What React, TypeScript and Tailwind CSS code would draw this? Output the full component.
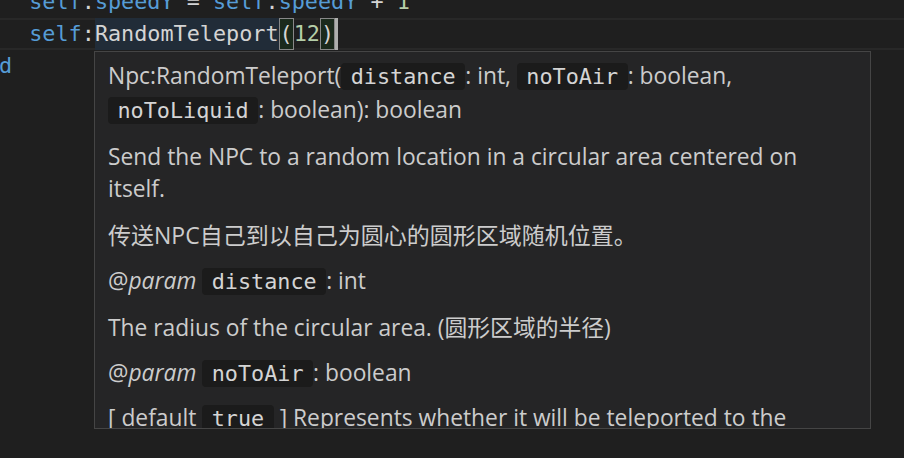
import React from "react";

const MONO = "font-['DejaVu_Sans_Mono',monospace] text-[21.8px]";
const SANS = "font-['Open_Sans','Noto_Sans_CJK_SC',sans-serif]";

function Chip({ children }: { children: React.ReactNode }) {
  return (
    <span
      className={`${MONO} inline-block h-[27px] rounded-[4px] bg-[#1b1b1b] px-[9.5px] leading-[27px] text-[#d4d4d4]`}
    >
      {children}
    </span>
  );
}

function Param({ name, type }: { name: string; type: string }) {
  return (
    <div className="flex h-[32px] items-center whitespace-pre">
      <span>@</span>
      <span className="italic">param</span>
      <span> </span>
      <Chip>{name}</Chip>
      <span>: {type}</span>
    </div>
  );
}

export default function App() {
  return (
    <div className="relative h-[458px] w-[904px] overflow-hidden bg-[#1f1f1f]">
      {/* editor lines */}
      <div className={`${MONO} -mt-[14px] flex flex-col whitespace-pre pl-[3px] text-[#d4d4d4]`}>
        <div className="h-[32px] leading-[32px]">
          {"  "}
          <span className="text-[#569cd6]">self</span>.
          <span className="text-[#569cd6]">speedY</span> = <span className="text-[#569cd6]">self</span>.
          <span className="text-[#569cd6]">speedY</span> + <span className="text-[#b5cea8]">1</span>
        </div>
        <div className="-ml-[3px] flex h-[32px] items-stretch pl-[3px] leading-[28px] shadow-[inset_0_2px_0_#282828,inset_0_-2px_0_#282828]">
          <span className="pt-[2px]">{"  "}</span>
          <span className="pt-[2px] text-[#569cd6]">self</span>
          <span className="pt-[2px]">:</span>
          <span className="bg-[#212c38] pt-[2px]">RandomTeleport</span>
          <span className="border border-[#888888] bg-[#1b2a1c] pt-[1px] leading-[28px]">(</span>
          <span className="pt-[2px] text-[#b5cea8]">12</span>
          <span className="border border-[#888888] bg-[#1b2a1c] pt-[1px] leading-[28px]">)</span>
          <span className="w-[3px] bg-[#aeafad]" />
        </div>
        <div className="-ml-[4px] h-[32px] leading-[32px] text-[#569cd6]">d</div>
      </div>

      {/* hover widget */}
      <div
        className={`${SANS} absolute left-[94px] top-[51px] h-[378px] w-[777px] overflow-hidden border border-[#454545] bg-[#252526] px-[13px] pt-[7px] text-[22.8px] text-[#cccccc]`}
      >
        <div className="flex flex-col">
          <div className="flex h-[34px] items-center whitespace-pre">
            <span>Npc:RandomTeleport(</span>
            <Chip>distance</Chip>
            <span>: int, </span>
            <Chip>noToAir</Chip>
            <span>: boolean,</span>
          </div>
          <div className="flex h-[34px] items-center whitespace-pre">
            <Chip>noToLiquid</Chip>
            <span>: boolean): boolean</span>
          </div>

          <div className="mt-[14px] whitespace-pre leading-[32px]">
            <div>Send the NPC to a random location in a circular area centered on</div>
            <div>itself.</div>
          </div>

          <div className="mt-[14px] whitespace-pre text-[23px] leading-[32px]">
            传送NPC自己到以自己为圆心的圆形区域随机位置。
          </div>

          <div className="mt-[14px]">
            <Param name="distance" type="int" />
          </div>

          <div className="mt-[15px] whitespace-pre leading-[32px]">
            The radius of the circular area. (圆形区域的半径)
          </div>

          <div className="mt-[13px]">
            <Param name="noToAir" type="boolean" />
          </div>

          <div className="mt-[13px] flex h-[32px] items-center whitespace-pre">
            <span>[ default </span>
            <Chip>true</Chip>
            <span> ] Represents whether it will be teleported to the</span>
          </div>
        </div>
      </div>
    </div>
  );
}
